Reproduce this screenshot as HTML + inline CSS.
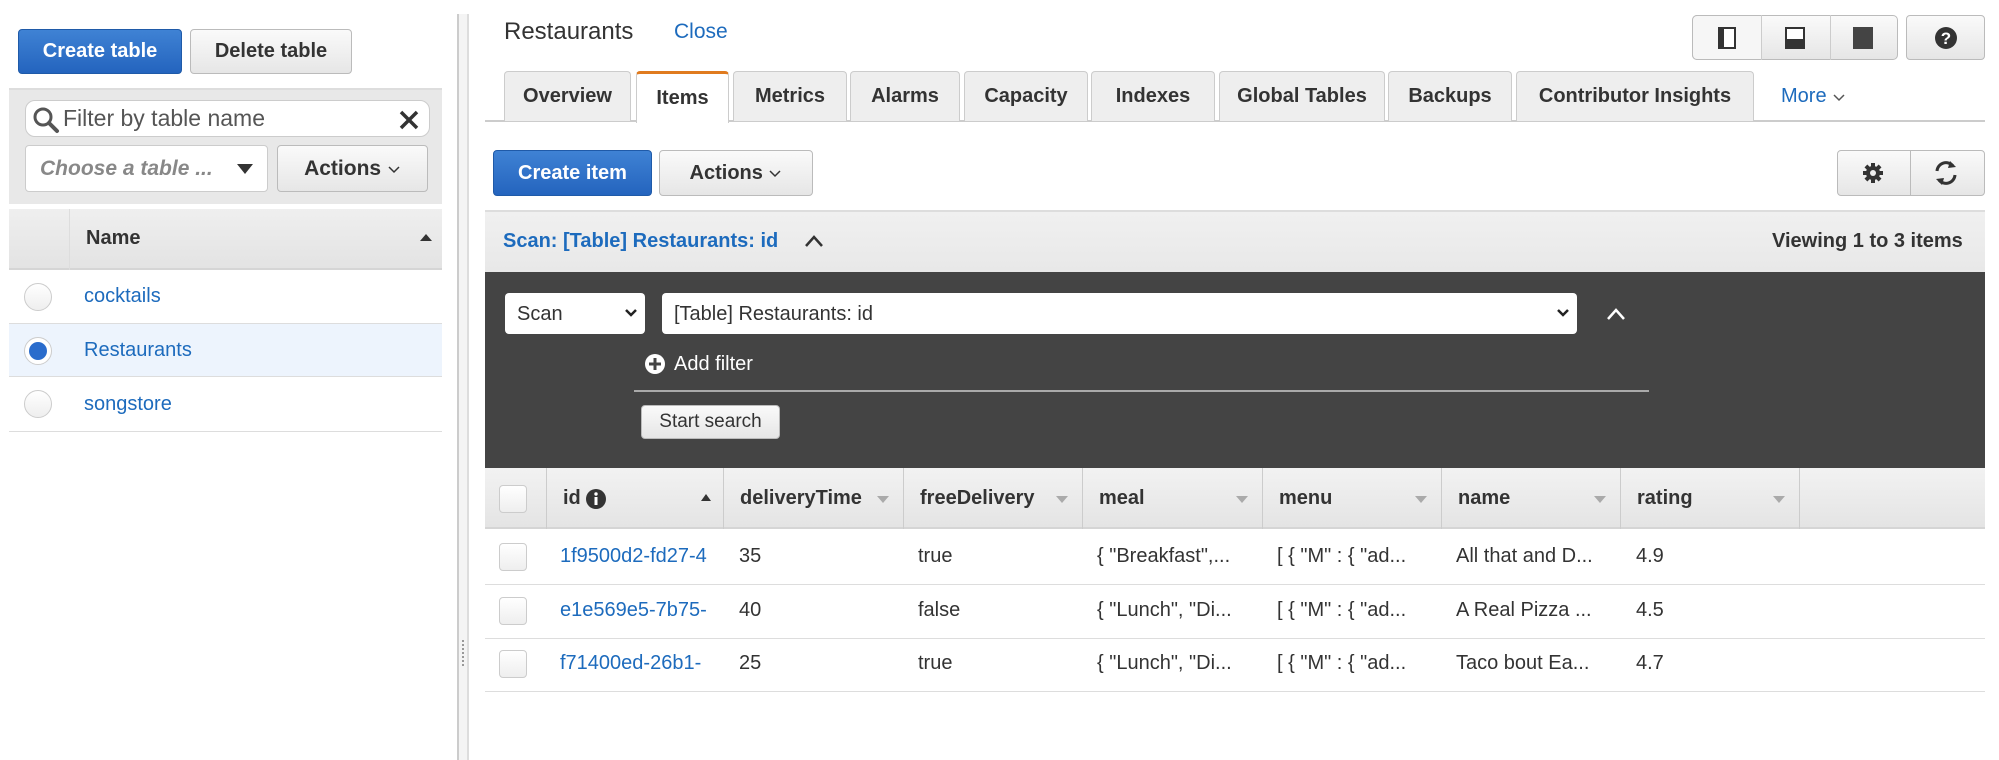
<!DOCTYPE html>
<html><head><meta charset="utf-8">
<style>
*{box-sizing:border-box;margin:0;padding:0}
body{width:1999px;height:760px;background:#fff;font-family:"Liberation Sans",Arial,sans-serif;color:#333;position:relative;overflow:hidden;font-size:19px}
.a{position:absolute}
.btn{position:absolute;border:1px solid #bbb;border-radius:4px;background:linear-gradient(#fafafa,#e6e6e6);font-weight:bold;font-size:20px;color:#333;display:flex;align-items:center;justify-content:center}
.pri{background:linear-gradient(#3f82d4,#2464be);border-color:#1f5aa8;color:#fff}
.tab{position:absolute;top:71px;height:50px;border:1px solid #ccc;border-bottom:none;border-radius:4px 4px 0 0;background:#eee;font-weight:bold;font-size:20px;display:flex;align-items:center;justify-content:center;color:#333}
.radio{position:absolute;left:24px;width:28px;height:28px;border-radius:50%;border:1px solid #ccc;background:linear-gradient(#fff,#eee)}
.th{position:absolute;top:468px;height:61px;border-left:1px solid #ccc;font-weight:bold;font-size:20px;display:flex;align-items:center;padding-left:16px}
.tri{position:absolute;right:14px;top:28px;width:0;height:0;border-left:6px solid transparent;border-right:6px solid transparent;border-top:7px solid #aaa}
.cb{position:absolute;left:499px;width:28px;height:28px;border:1px solid #ccc;border-radius:4px;background:linear-gradient(#fff,#eee)}
.td{position:absolute;font-size:20px;color:#333}
.link{color:#1d6bbd}
.row{position:absolute;left:485px;width:1500px;height:1px;background:#ddd}
</style></head><body>
<!-- left -->
<div class="btn pri" style="left:18px;top:29px;width:164px;height:45px">Create table</div>
<div class="btn" style="left:190px;top:29px;width:162px;height:45px">Delete table</div>
<div class="a" style="left:9px;top:88px;width:433px;height:116px;background:#e8e8e8;border-top:2px solid #ddd"></div>
<div class="a" style="left:25px;top:100px;width:405px;height:37px;background:#fff;border:1px solid #ccc;border-radius:10px"></div>
<svg class="a" style="left:32px;top:106px" width="28" height="28" viewBox="0 0 28 28"><circle cx="11" cy="11" r="8" fill="none" stroke="#555" stroke-width="3"/><path d="M17 17l8 8" stroke="#555" stroke-width="4" stroke-linecap="round"/></svg>
<div class="a" style="left:63px;top:105px;font-size:23px;color:#555">Filter by table name</div>
<svg class="a" style="left:398px;top:109px" width="22" height="22"><path d="M3 3l16 16M19 3L3 19" stroke="#333" stroke-width="3.5"/></svg>
<div class="a" style="left:25px;top:145px;width:243px;height:47px;background:#fff;border:1px solid #ccc;border-radius:4px"></div>
<div class="a" style="left:40px;top:157px;font-size:21px;font-style:italic;font-weight:bold;color:#888">Choose a table ...</div>
<div class="a" style="left:237px;top:164px;border-left:8px solid transparent;border-right:8px solid transparent;border-top:10px solid #333"></div>
<div class="btn" style="left:277px;top:145px;width:151px;height:47px;font-size:21px">Actions&nbsp;<svg width="14" height="10"><path d="M2 3l5 5 5-5" fill="none" stroke="#333" stroke-width="1.5"/></svg></div>
<div class="a" style="left:9px;top:209px;width:433px;height:61px;background:linear-gradient(#efefef,#e3e3e3);border-bottom:2px solid #d5d5d5"></div>
<div class="a" style="left:69px;top:209px;width:1px;height:61px;background:#ddd"></div>
<div class="a" style="left:86px;top:227px;font-weight:bold;font-size:20px">Name</div>
<div class="a" style="left:420px;top:234px;border-left:6px solid transparent;border-right:6px solid transparent;border-bottom:7px solid #333"></div>
<div class="a" style="left:9px;top:323px;width:433px;height:54px;background:#edf4fd;border-top:1px solid #ddd;border-bottom:1px solid #ddd"></div>
<div class="a" style="left:9px;top:431px;width:433px;height:1px;background:#ddd"></div>
<div class="radio" style="top:283px"></div>
<div class="radio" style="top:337px;background:#fff"><div style="position:absolute;left:4px;top:4px;width:18px;height:18px;border-radius:50%;background:#2a6ccc"></div></div>
<div class="radio" style="top:390px"></div>
<div class="a link" style="left:84px;top:285px;font-size:20px">cocktails</div>
<div class="a link" style="left:84px;top:339px;font-size:20px">Restaurants</div>
<div class="a link" style="left:84px;top:393px;font-size:20px">songstore</div>
<!-- splitter -->
<div class="a" style="left:457px;top:14px;width:12px;height:746px;border-left:2px solid #ccc;border-right:2px solid #ddd;background:#f4f4f4"></div>
<div class="a" style="left:462px;top:640px;width:2px;height:26px;border-left:2px dotted #999"></div>
<!-- right header -->
<div class="a" style="left:504px;top:18px;font-size:24px;color:#333">Restaurants</div>
<div class="a link" style="left:674px;top:20px;font-size:21px">Close</div>
<div class="a" style="left:1692px;top:15px;width:206px;height:45px;border:1px solid #bbb;border-radius:5px;background:linear-gradient(#fafafa,#e6e6e6)"></div>
<div class="a" style="left:1692px;top:15px;width:70px;height:45px;background:#f6f6f6;border-radius:5px 0 0 5px;border:1px solid #bbb"></div>
<div class="a" style="left:1761px;top:15px;width:1px;height:45px;background:#ccc"></div>
<div class="a" style="left:1830px;top:15px;width:1px;height:45px;background:#ccc"></div>
<div class="a" style="left:1718px;top:27px;width:18px;height:22px;border:2px solid #333;border-left:6px solid #333;background:#fff"></div>
<div class="a" style="left:1785px;top:27px;width:20px;height:22px;border:2px solid #333;background:linear-gradient(#fff 55%,#333 55%)"></div>
<div class="a" style="left:1853px;top:27px;width:20px;height:22px;background:#444"></div>
<div class="btn" style="left:1906px;top:15px;width:79px;height:45px"><svg width="24" height="24" viewBox="0 0 24 24"><circle cx="12" cy="12" r="11" fill="#333"/><text x="12" y="18" text-anchor="middle" font-size="17" font-weight="bold" fill="#fff" font-family="Liberation Sans">?</text></svg></div>
<!-- tabs -->
<div class="a" style="left:485px;top:120px;width:1500px;height:2px;background:#ccc"></div>
<div class="tab" style="left:504px;width:127px">Overview</div>
<div class="tab" style="left:636px;width:93px;height:52px;background:#fff;border-top:3px solid #e07b1f">Items</div>
<div class="tab" style="left:733px;width:114px">Metrics</div>
<div class="tab" style="left:850px;width:110px">Alarms</div>
<div class="tab" style="left:964px;width:124px">Capacity</div>
<div class="tab" style="left:1091px;width:124px">Indexes</div>
<div class="tab" style="left:1219px;width:166px">Global Tables</div>
<div class="tab" style="left:1388px;width:124px">Backups</div>
<div class="tab" style="left:1516px;width:238px">Contributor Insights</div>
<div class="a link" style="left:1781px;top:85px;font-size:20px">More <svg width="14" height="10"><path d="M2 3l5 5 5-5" fill="none" stroke="#555" stroke-width="1.5"/></svg></div>
<!-- actions -->
<div class="btn pri" style="left:493px;top:150px;width:159px;height:46px">Create item</div>
<div class="btn" style="left:659px;top:150px;width:154px;height:46px">Actions&nbsp;<svg width="14" height="10"><path d="M2 3l5 5 5-5" fill="none" stroke="#333" stroke-width="1.5"/></svg></div>
<div class="btn" style="left:1837px;top:150px;width:148px;height:46px"></div>
<div class="a" style="left:1910px;top:150px;width:1px;height:46px;background:#bbb"></div>
<svg class="a" style="left:1862px;top:162px" width="22" height="22" viewBox="0 0 22 22"><g fill="#333"><circle cx="11" cy="11" r="7"/><rect x="9" y="1" width="4" height="20"/><rect x="1" y="9" width="20" height="4"/><rect x="9" y="1" width="4" height="20" transform="rotate(45 11 11)"/><rect x="9" y="1" width="4" height="20" transform="rotate(-45 11 11)"/></g><circle cx="11" cy="11" r="3" fill="#eee"/></svg>
<svg class="a" style="left:1931px;top:159px" width="30" height="28" viewBox="0 0 30 28"><path d="M6 12a9 9 0 0 1 16-5" fill="none" stroke="#333" stroke-width="3"/><path d="M19 2l6 6-8 1z" fill="#333"/><path d="M24 16a9 9 0 0 1-16 5" fill="none" stroke="#333" stroke-width="3"/><path d="M11 26l-6-6 8-1z" fill="#333"/></svg>
<!-- scan bar -->
<div class="a" style="left:485px;top:210px;width:1500px;height:62px;background:linear-gradient(#f0f0f0,#e8e8e8);border-top:2px solid #ddd"></div>
<div class="a link" style="left:503px;top:230px;font-size:20px;font-weight:bold">Scan: [Table] Restaurants: id</div>
<svg class="a" style="left:803px;top:233px" width="22" height="16"><path d="M3 13l8-9 8 9" fill="none" stroke="#333" stroke-width="2.5"/></svg>
<div class="a" style="left:1772px;top:230px;font-size:20px;font-weight:bold">Viewing 1 to 3 items</div>
<!-- dark panel -->
<div class="a" style="left:485px;top:272px;width:1500px;height:196px;background:#444"></div>
<div class="a" style="left:505px;top:293px;width:140px;height:41px;background:#fff;border-radius:4px;font-size:20px;padding:10px 0 0 12px">Scan</div>
<svg class="a" style="left:624px;top:308px" width="14" height="10"><path d="M2 2l5 5 5-5" fill="none" stroke="#222" stroke-width="2.5"/></svg>
<div class="a" style="left:662px;top:293px;width:915px;height:41px;background:#fff;border-radius:4px;font-size:20px;padding:10px 0 0 12px">[Table] Restaurants: id</div>
<svg class="a" style="left:1556px;top:308px" width="14" height="10"><path d="M2 2l5 5 5-5" fill="none" stroke="#222" stroke-width="2.5"/></svg>
<svg class="a" style="left:1605px;top:306px" width="22" height="16"><path d="M3 13l8-9 8 9" fill="none" stroke="#fff" stroke-width="2.5"/></svg>
<svg class="a" style="left:645px;top:354px" width="20" height="20"><circle cx="10" cy="10" r="10" fill="#fff"/><path d="M10 4v12M4 10h12" stroke="#444" stroke-width="3"/></svg>
<div class="a" style="left:674px;top:353px;font-size:20px;color:#fff">Add filter</div>
<div class="a" style="left:634px;top:390px;width:1015px;height:2px;background:#aaa"></div>
<div class="btn" style="left:641px;top:405px;width:139px;height:34px;font-weight:normal;font-size:19px">Start search</div>
<!-- table header -->
<div class="a" style="left:485px;top:468px;width:1500px;height:61px;background:linear-gradient(#f2f2f2,#e4e4e4);border-bottom:2px solid #d5d5d5"></div>
<div class="cb" style="top:485px"></div>
<div class="th" style="left:546px;width:177px">id&nbsp;<svg width="20" height="20"><circle cx="10" cy="10" r="10" fill="#333"/><rect x="8.5" y="8" width="3" height="8" fill="#fff"/><circle cx="10" cy="5" r="1.7" fill="#fff"/></svg><div style="position:absolute;right:12px;top:26px;border-left:5px solid transparent;border-right:5px solid transparent;border-bottom:7px solid #333"></div></div>
<div class="th" style="left:723px;width:180px">deliveryTime<div class="tri"></div></div>
<div class="th" style="left:903px;width:179px">freeDelivery<div class="tri"></div></div>
<div class="th" style="left:1082px;width:180px">meal<div class="tri"></div></div>
<div class="th" style="left:1262px;width:179px">menu<div class="tri"></div></div>
<div class="th" style="left:1441px;width:179px">name<div class="tri"></div></div>
<div class="th" style="left:1620px;width:180px;border-right:1px solid #ccc">rating<div class="tri"></div></div>
<!-- rows -->
<div class="row" style="top:584px"></div><div class="row" style="top:638px"></div><div class="row" style="top:691px"></div>
<div class="cb" style="top:543px"></div><div class="cb" style="top:597px"></div><div class="cb" style="top:650px"></div>
<div class="td link" style="left:560px;top:545px;width:150px;overflow:hidden;white-space:nowrap">1f9500d2-fd27-4</div>
<div class="td link" style="left:560px;top:599px;width:150px;overflow:hidden;white-space:nowrap">e1e569e5-7b75-</div>
<div class="td link" style="left:560px;top:652px;width:150px;overflow:hidden;white-space:nowrap">f71400ed-26b1-</div>
<div class="td" style="left:739px;top:545px">35</div><div class="td" style="left:739px;top:599px">40</div><div class="td" style="left:739px;top:652px">25</div>
<div class="td" style="left:918px;top:545px">true</div><div class="td" style="left:918px;top:599px">false</div><div class="td" style="left:918px;top:652px">true</div>
<div class="td" style="left:1097px;top:545px">{ "Breakfast",...</div><div class="td" style="left:1097px;top:599px">{ "Lunch", "Di...</div><div class="td" style="left:1097px;top:652px">{ "Lunch", "Di...</div>
<div class="td" style="left:1277px;top:545px">[ { "M" : { "ad...</div><div class="td" style="left:1277px;top:599px">[ { "M" : { "ad...</div><div class="td" style="left:1277px;top:652px">[ { "M" : { "ad...</div>
<div class="td" style="left:1456px;top:545px">All that and D...</div><div class="td" style="left:1456px;top:599px">A Real Pizza ...</div><div class="td" style="left:1456px;top:652px">Taco bout Ea...</div>
<div class="td" style="left:1636px;top:545px">4.9</div><div class="td" style="left:1636px;top:599px">4.5</div><div class="td" style="left:1636px;top:652px">4.7</div>
</body></html>
